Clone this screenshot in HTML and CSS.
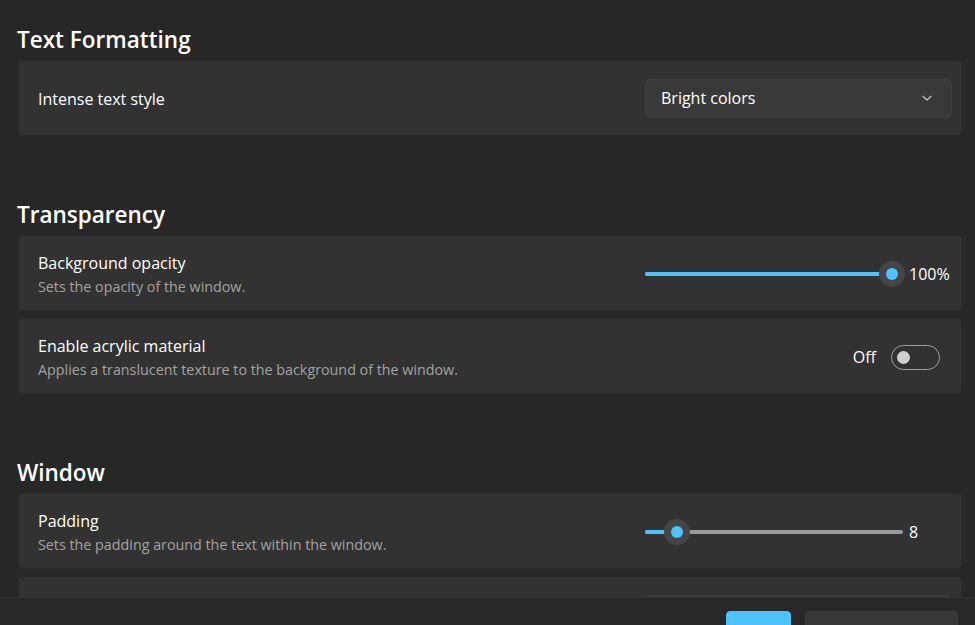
FILE: index.html
```html
<!DOCTYPE html>
<html lang="en">
<head>
  <meta charset="UTF-8" />
  <title>Appearance</title>
  <link rel="stylesheet" href="styles.css">
</head>
<body>
  <div class="app">
    <main class="content">

      <section class="group">
        <h2>Text Formatting</h2>
        <div class="card">
          <div class="label">
            <div class="title">Intense text style</div>
          </div>
          <div class="control">
            <div class="combo">
              <span>Bright colors</span>
              <svg width="12" height="12" viewBox="0 0 12 12"><path d="M2 4.2 L6 8 L10 4.2" fill="none" stroke="#c8c8c8" stroke-width="1.2" stroke-linecap="round" stroke-linejoin="round"/></svg>
            </div>
          </div>
        </div>
      </section>

      <section class="group">
        <h2>Transparency</h2>
        <div class="card">
          <div class="label">
            <div class="title">Background opacity</div>
            <div class="desc">Sets the opacity of the window.</div>
          </div>
          <div class="control">
            <div class="slider">
              <div class="track"></div>
              <div class="fill" style="width: 247px"></div>
              <div class="thumb" style="left: 234px"><span></span></div>
            </div>
            <span class="value">100%</span>
          </div>
        </div>
        <div class="card">
          <div class="label">
            <div class="title">Enable acrylic material</div>
            <div class="desc">Applies a translucent texture to the background of the window.</div>
          </div>
          <div class="control end">
            <span class="state">Off</span>
            <div class="toggle"><span></span></div>
          </div>
        </div>
      </section>

      <section class="group">
        <h2>Window</h2>
        <div class="card">
          <div class="label">
            <div class="title">Padding</div>
            <div class="desc">Sets the padding around the text within the window.</div>
          </div>
          <div class="control">
            <div class="slider">
              <div class="track"></div>
              <div class="fill" style="width: 31px"></div>
              <div class="thumb" style="left: 19px"><span></span></div>
            </div>
            <span class="value">8</span>
          </div>
        </div>
        <div class="card">
          <div class="label">
            <div class="title">Scrollbar visibility</div>
          </div>
          <div class="control">
            <div class="combo">
              <span>Visible</span>
              <svg width="12" height="12" viewBox="0 0 12 12"><path d="M2 4.2 L6 8 L10 4.2" fill="none" stroke="#c8c8c8" stroke-width="1.2" stroke-linecap="round" stroke-linejoin="round"/></svg>
            </div>
          </div>
        </div>
      </section>

    </main>

    <footer class="footer">
      <button class="btn primary">Save</button>
      <button class="btn">Discard changes</button>
    </footer>
  </div>
</body>
</html>
```

FILE: styles.css
```css
* {
  box-sizing: border-box;
}

body {
  margin: 0;
  background: #272727;
  color: #fff;
  font-family: 'Open Sans', 'Noto Sans', sans-serif;
}

.app {
  height: 625px;
  display: flex;
  flex-direction: column;
  overflow: hidden;
}

.content {
  flex: 1;
  overflow: hidden;
  padding: 22px 13px 0 18px;
}

.group + .group {
  margin-top: 61px;
}

.group h2 {
  margin: 0 0 4px -1px;
  padding-top: 2px;
  font-size: 22.5px;
  font-weight: 600;
  line-height: 32px;
}

.card {
  height: 76px;
  display: flex;
  align-items: center;
  justify-content: space-between;
  padding: 2px 9px 0 19px;
  margin-bottom: 7px;
  background: #323232;
  border: 1px solid #2a2a2a;
  border-radius: 4px;
}

.label {
  display: flex;
  flex-direction: column;
  gap: 2px;
}

.title {
  font-size: 16px;
  line-height: 23px;
}

.desc {
  font-size: 14.3px;
  line-height: 20px;
  color: #a2a2a2;
}

.control {
  width: 307px;
  display: flex;
  align-items: center;
}

.control.end {
  justify-content: flex-end;
  padding-right: 12px;
}

.combo {
  width: 307px;
  height: 39px;
  margin-top: -2px;
  display: flex;
  align-items: center;
  justify-content: space-between;
  padding: 0 18px 0 15px;
  background: #393939;
  border: 1px solid #3e3e3e;
  border-radius: 5px;
  font-size: 16px;
}

.slider {
  position: relative;
  width: 260px;
  height: 26px;
}

.track,
.fill {
  position: absolute;
  top: 11px;
  left: 0;
  height: 4px;
  border-radius: 2px;
}

.track {
  right: 2px;
  background: #9a9a9a;
}

.fill {
  background: #4cc2ff;
}

.thumb {
  position: absolute;
  top: 0;
  width: 26px;
  height: 26px;
  border-radius: 50%;
  background: #454545;
  display: flex;
  align-items: center;
  justify-content: center;
}

.thumb span {
  width: 12px;
  height: 12px;
  border-radius: 50%;
  background: #4cc2ff;
}

.value {
  margin-left: 4px;
  font-size: 16px;
}

.state {
  font-size: 16px;
  margin-right: 15px;
}

.toggle {
  width: 49px;
  height: 25px;
  border: 1.5px solid #a0a0a0;
  border-radius: 13px;
  display: flex;
  align-items: center;
  padding-left: 5px;
}

.toggle span {
  width: 13px;
  height: 13px;
  border-radius: 50%;
  background: #cfcfcf;
}

.footer {
  height: 28px;
  flex: none;
  overflow: hidden;
  display: flex;
  justify-content: flex-end;
  gap: 14px;
  padding: 13px 17px 0 0;
  background: #282828;
  border-top: 1px solid #353535;
}

.btn {
  height: 40px;
  flex: none;
  border-radius: 4px;
  font-family: inherit;
  font-size: 16px;
  color: #fff;
  background: #373737;
  border: 1px solid #3f3f3f;
  width: 153px;
}

.btn.primary {
  width: 65px;
  background: #4cc2ff;
  border-color: #4cc2ff;
  color: #000;
}
```
